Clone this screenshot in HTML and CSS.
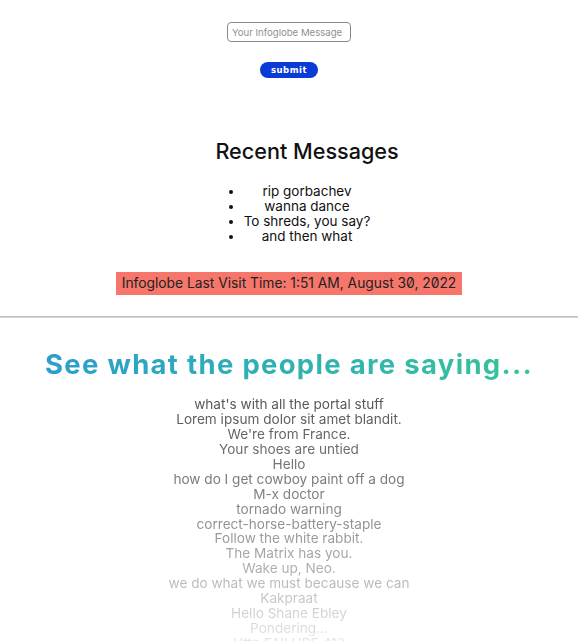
FILE: index.html
```html
<!DOCTYPE html>
<html>
<head>
<meta charset="utf-8">
<link rel="stylesheet" href="styles.css">
</head>
<body>
<div class="top">
  <form class="msg-form">
    <input class="msg-input" type="text" placeholder="Your Infoglobe Message">
    <button class="submit-btn" type="button">submit</button>
  </form>
  <section class="recent">
    <h2 class="recent-title">Recent Messages</h2>
    <ul class="recent-list">
      <li>rip gorbachev</li>
      <li>wanna dance</li>
      <li>To shreds, you say?</li>
      <li>and then what</li>
    </ul>
  </section>
  <div class="visit">Infoglobe Last Visit Time: 1:51 AM, August 30, 2022</div>
</div>
<hr class="divider">
<section class="people">
  <h1 class="people-title">See what the people are saying...</h1>
  <div class="people-list">
    <div>what's with all the portal stuff</div>
    <div>Lorem ipsum dolor sit amet blandit.</div>
    <div>We're from France.</div>
    <div>Your shoes are untied</div>
    <div>Hello</div>
    <div>how do I get cowboy paint off a dog</div>
    <div>M-x doctor</div>
    <div>tornado warning</div>
    <div>correct-horse-battery-staple</div>
    <div>Follow the white rabbit.</div>
    <div>The Matrix has you.</div>
    <div>Wake up, Neo.</div>
    <div>we do what we must because we can</div>
    <div>Kakpraat</div>
    <div>Hello Shane Ebley</div>
    <div>Pondering...</div>
    <div>Http FAILURE 413</div>
  </div>
</section>
</body>
</html>
```
FILE: styles.css
```css
html, body {
  margin: 0;
  padding: 0;
  background: #fff;
}
body {
  font-family: Inter, "Liberation Sans", sans-serif;
  color: #111;
  height: 641px;
  overflow: hidden;
}
.top {
  display: flex;
  flex-direction: column;
  align-items: center;
  padding-top: 22px;
}
.msg-form {
  display: flex;
  flex-direction: column;
  align-items: center;
  gap: 20px;
}
.msg-input {
  box-sizing: border-box;
  width: 124px;
  height: 20px;
  border: 1px solid #8a8a8a;
  border-radius: 4px;
  padding: 0 4px;
  font-family: Inter, "Liberation Sans", sans-serif;
  font-size: 9.6px;
  color: #333;
  outline: none;
}
.msg-input::placeholder {
  color: #8f8f8f;
}
.submit-btn {
  box-sizing: border-box;
  width: 58px;
  height: 16px;
  border: none;
  border-radius: 8px;
  background: #0b3bd6;
  color: #fff;
  font-family: "DejaVu Sans", Inter, sans-serif;
  font-weight: bold;
  font-size: 8.5px;
  letter-spacing: 0.5px;
  padding: 0;
  line-height: 16px;
}
.recent {
  display: flex;
  flex-direction: column;
  align-items: center;
  padding-left: 36px;
  margin-top: 60px;
}
.recent-title {
  margin: 0;
  font-size: 21.6px;
  font-weight: 500;
  line-height: 26px;
  color: #111;
}
.recent-list {
  margin: 20px 0 0;
  padding: 0;
  text-align: center;
  font-size: 13.5px;
  line-height: 15px;
  color: #111;
}
.recent-list li {
  list-style: disc outside;
}
.visit {
  margin-top: 28px;
  background: #f7766b;
  padding: 4px 6px;
  font-size: 13.8px;
  line-height: 15px;
  color: #222;
  font-feature-settings: "zero" 1;
}
.divider {
  margin: 21px 0 0;
  border: none;
  height: 2px;
  background: linear-gradient(to bottom, #b5b5b5, #dedede);
}
.people {
  display: flex;
  flex-direction: column;
  align-items: center;
}
.people-title {
  margin: 29px 0 0;
  font-size: 27.5px;
  font-weight: 700;
  letter-spacing: 1.3px;
  line-height: 34px;
  background: linear-gradient(to right, #2a9fcb, #36c39a);
  -webkit-background-clip: text;
  background-clip: text;
  color: transparent;
}
.people-list {
  margin-top: 16px;
  text-align: center;
  font-size: 13.6px;
  line-height: 14.93px;
  color: #555;
  -webkit-mask-image: linear-gradient(to bottom, rgba(0,0,0,1) 0%, rgba(0,0,0,0.72) 41%, rgba(0,0,0,0.46) 69%, rgba(0,0,0,0.25) 86%, rgba(0,0,0,0.12) 100%);
  mask-image: linear-gradient(to bottom, rgba(0,0,0,1) 0%, rgba(0,0,0,0.72) 41%, rgba(0,0,0,0.46) 69%, rgba(0,0,0,0.25) 86%, rgba(0,0,0,0.12) 100%);
}
```
